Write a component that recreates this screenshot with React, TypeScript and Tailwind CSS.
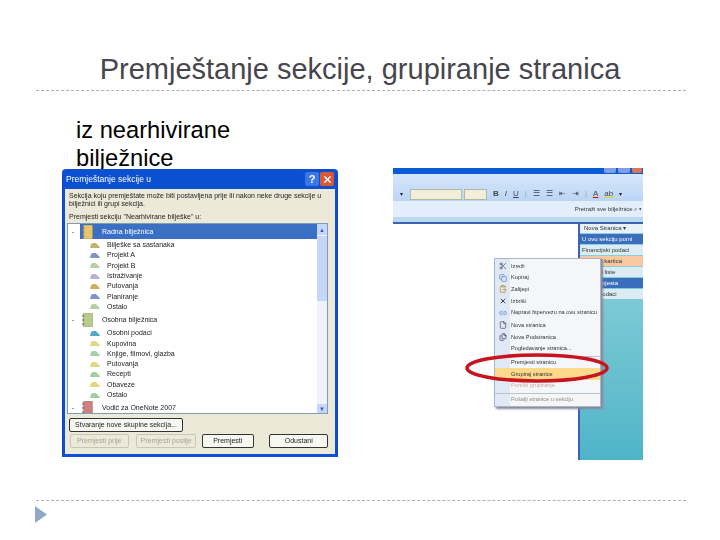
import { ClipboardPaste, Copy, File, Files, Link2, Scissors, X } from "lucide-react";

const NOTEBOOKS = [
  {
    name: "Radna bilježnica",
    color: "#e8c468",
    selected: true,
    sections: [
      { name: "Bilješke sa sastanaka", color: "#c8b070" },
      { name: "Projekt A", color: "#7f93c8" },
      { name: "Projekt B", color: "#b5cfa8" },
      { name: "Istraživanje", color: "#b5b5d0" },
      { name: "Putovanja", color: "#d0b060" },
      { name: "Planiranje", color: "#7f93c8" },
      { name: "Ostalo", color: "#b5cfa8" },
    ],
  },
  {
    name: "Osobna bilježnica",
    color: "#b5cf8a",
    selected: false,
    sections: [
      { name: "Osobni podaci", color: "#58a8c8" },
      { name: "Kupovina", color: "#e0d880" },
      { name: "Knjige, filmovi, glazba", color: "#a8d0a8" },
      { name: "Putovanja", color: "#e0d880" },
      { name: "Recepti", color: "#a0d0a0" },
      { name: "Obaveze", color: "#e0d880" },
      { name: "Ostalo", color: "#a0d0a0" },
    ],
  },
];

const PANEL_ROWS = [
  { label: "U ovu sekciju pomi", cls: "bg-[#3a6ebd] text-white" },
  { label: "Financijski podaci", cls: "bg-[#dcecf4] text-[#333]" },
  { label: "Pregled kartica", cls: "bg-[#f8c8a0] text-[#333]" },
  { label: "Zadaci i liste", cls: "bg-[#dcecf4] text-[#333]" },
  { label: "S web mjesta", cls: "bg-[#3a6ebd] text-white" },
  { label: "Ostali podaci", cls: "bg-[#dcecf4] text-[#333]" },
];

function SectionIcon({ color }: { color: string }) {
  return (
    <svg width="10" height="5" viewBox="0 0 12 6" preserveAspectRatio="none" className="shrink-0">
      <path d="M0 6 L1 2 Q1.5 0 4 0 L7 0 L11 4 L12 6 Z" fill={color} />
    </svg>
  );
}

function NotebookIcon({ color }: { color: string }) {
  return (
    <svg width="11" height="14" viewBox="0 0 11 15" className="shrink-0">
      <rect x="1" y="0" width="10" height="15" rx="1" fill={color} stroke="#8a8a70" strokeWidth="0.5" />
      <rect x="0" y="2" width="2" height="2" fill="#777" />
      <rect x="0" y="6.5" width="2" height="2" fill="#777" />
      <rect x="0" y="11" width="2" height="2" fill="#777" />
    </svg>
  );
}

function DialogButton({ label, disabled, width }: { label: string; disabled?: boolean; width: string }) {
  return (
    <div
      className={`flex h-[14px] items-center justify-center whitespace-nowrap rounded-[2px] border text-[7px] ${width} ${
        disabled ? "border-[#c8c6b8] text-[#a5a398]" : "border-[#333] bg-[#f8f8f2] text-[#222]"
      }`}
    >
      {label}
    </div>
  );
}

function MoveDialog() {
  return (
    <div className="flex h-[288px] w-[276px] shrink-0 flex-col rounded-t-[4px] bg-[#0a50d0] px-[3px] pb-[3px] blur-[0.5px]">
      <div className="flex h-[20px] shrink-0 items-center justify-between pl-[1px] pr-[1px] text-[8.5px] text-white">
        <span>Premještanje sekcije u</span>
        <div className="flex gap-[1px]">
          <div className="flex h-[14px] w-[14px] items-center justify-center rounded-[2px] bg-[#3a78e8] text-[11px] font-bold leading-none">?</div>
          <div className="flex h-[14px] w-[14px] items-center justify-center rounded-[2px] bg-[#d8583a]">
            <X size={11} strokeWidth={3} />
          </div>
        </div>
      </div>
      <div className="flex min-h-0 flex-1 flex-col bg-[#ece9d8] pb-[2px] pl-[2px] pr-[7px] pt-[3px] text-[7px] leading-[8px] text-[#222]">
        <p className="whitespace-nowrap px-[2px]">
          Sekcija koju premještate može biti postavljena prije ili nakon neke druge sekcije u
          <br />
          bilježnici ili grupi sekcija.
        </p>
        <p className="mt-[5px] px-[2px]">Premjesti sekciju "Nearhivirane bilješke" u:</p>
        <div className="mt-[2px] flex h-[191px] shrink-0 border border-[#7f9db9] bg-white">
          <div className="min-w-0 flex-1 overflow-hidden">
            {NOTEBOOKS.map((nb) => (
              <div key={nb.name}>
                <div className="flex h-[15px] items-center">
                  <span className="w-[12px] pl-[4px] text-[#333]">-</span>
                  <div className={`flex h-full flex-1 items-center gap-[9px] pl-[2px] ${nb.selected ? "bg-[#3a6fc4] text-white" : ""}`}>
                    <NotebookIcon color={nb.color} />
                    <span>{nb.name}</span>
                  </div>
                </div>
                <div className="pt-[1px]">
                  {nb.sections.map((s) => (
                    <div key={s.name + s.color} className="flex h-[10.3px] items-center gap-[7px] pl-[22px]">
                      <SectionIcon color={s.color} />
                      <span>{s.name}</span>
                    </div>
                  ))}
                </div>
              </div>
            ))}
            <div className="flex h-[15px] items-center">
              <span className="w-[12px] pl-[4px] text-[#333]">-</span>
              <div className="flex items-center gap-[9px] pl-[2px]">
                <NotebookIcon color="#d08080" />
                <span>Vodič za OneNote 2007</span>
              </div>
            </div>
          </div>
          <div className="flex w-[10px] shrink-0 flex-col bg-[#eef3fb]">
            <div className="flex h-[11px] items-center justify-center bg-[#c5d6fa] text-[6px] text-[#3a5fa8]">▲</div>
            <div className="mt-[1px] h-[65px] bg-[#c5d6fa]" />
            <div className="flex-1" />
            <div className="flex h-[9px] items-center justify-center bg-[#c5d6fa] text-[6px] text-[#3a5fa8]">▼</div>
          </div>
        </div>
        <div className="mt-[4px] pl-[2px]">
          <DialogButton label="Stvaranje nove skupine sekcija..." width="w-[114px]" />
        </div>
        <div className="mt-[2px] flex pl-[3px]">
          <DialogButton label="Premjesti prije" disabled width="w-[59px]" />
          <div className="w-[8px]" />
          <DialogButton label="Premjesti poslije" disabled width="w-[60px]" />
          <div className="w-[6px]" />
          <DialogButton label="Premjesti" width="w-[52px]" />
          <div className="w-[16px]" />
          <DialogButton label="Odustani" width="w-[59px]" />
        </div>
      </div>
    </div>
  );
}

function ToolbarGlyphs() {
  return (
    <div className="ml-[6px] flex items-center gap-[6px] text-[8px] text-[#445]">
      <span className="font-bold">B</span>
      <span className="italic">I</span>
      <span className="underline">U</span>
      <span className="text-[#9aa]">|</span>
      <span>☰</span>
      <span>☰</span>
      <span>⇤</span>
      <span>⇥</span>
      <span className="text-[#9aa]">|</span>
      <span className="underline decoration-[#d00]">A</span>
      <span className="underline decoration-[#dd0]">ab</span>
      <span className="text-[6px] text-[#223]">▾</span>
    </div>
  );
}

function MenuRow({ label, icon, cls }: { label: string; icon?: React.ReactNode; cls?: string }) {
  return (
    <div className={`flex h-[11.7px] items-center whitespace-nowrap ${cls ?? ""}`}>
      <div className="flex w-[15px] shrink-0 justify-center text-[#445]">{icon}</div>
      <span className="pl-[1px]">{label}</span>
    </div>
  );
}

function ContextMenu() {
  return (
    <div className="absolute left-[101px] top-[90px] w-[107px] border border-[#a8b8c8] bg-[#f4f6f8] bg-[linear-gradient(to_right,#dfe8f5_15px,#f4f6f8_15px)] py-[1px] text-[5.7px] text-[#333] shadow-[2px_2px_2px_#889]">
      <MenuRow label="Izreži" icon={<Scissors size={8} />} />
      <MenuRow label="Kopiraj" icon={<Copy size={8} color="#5080c0" />} />
      <MenuRow label="Zalijepi" icon={<ClipboardPaste size={8} color="#b08820" />} />
      <MenuRow label="Izbriši" icon={<X size={8} strokeWidth={3} />} />
      <MenuRow label="Napravi hipervezu na ovu stranicu" icon={<Link2 size={8} color="#5080c0" />} />
      <div className="mt-[1px]">
        <MenuRow label="Nova stranica" icon={<File size={8} />} />
        <MenuRow label="Nova Podstranica" icon={<Files size={8} color="#335" />} />
        <MenuRow label="Pogledavanje stranica..." />
      </div>
      <div className="mt-[1px] border-t border-[#b8c4d0]">
        <MenuRow label="Premjesti stranicu" />
        <MenuRow label="Grupiraj stranice" cls="bg-[#fdd98c]" />
        <MenuRow label="Poništi grupiranje" cls="text-[#c8a8a8]" />
      </div>
      <div className="mt-[1px] border-t border-[#b8c4d0]">
        <MenuRow label="Pošalji stranice u sekciju" cls="text-[#8a8a8a]" />
      </div>
    </div>
  );
}

function OneNoteWindow() {
  return (
    <div className="relative flex h-[292px] w-[250px] shrink-0 flex-col overflow-hidden bg-white blur-[0.5px]">
      <div className="flex h-[6px] shrink-0 justify-end gap-[2px] bg-[#0a5cd6] pr-[1px]">
        <div className="h-[5px] w-[12px] rounded-b-[2px] bg-[#7f9fe0]" />
        <div className="h-[5px] w-[12px] rounded-b-[2px] bg-[#7f9fe0]" />
        <div className="h-[5px] w-[10px] rounded-b-[2px] bg-[#d87858]" />
      </div>
      <div className="flex h-[27px] shrink-0 items-end bg-gradient-to-b from-[#d6e6fb] to-[#bcd5f5] pb-[1px] pl-[7px]">
        <span className="mr-[7px] w-[3px] text-[6px] leading-[11px] text-[#223]">▾</span>
        <div className="h-[11px] w-[52px] border border-[#b0b8a8] bg-[#f3eed8]" />
        <div className="ml-[2px] h-[11px] w-[23px] border border-[#b0b8a8] bg-[#f3eed8]" />
        <ToolbarGlyphs />
      </div>
      <div className="flex h-[16px] shrink-0 items-center justify-end bg-[#e2eefc] pr-[1px] text-[6px] text-[#333]">
        Pretraži sve bilježnice ⌕ ▾
      </div>
      <div className="h-[5px] shrink-0 bg-[#bcd8ee]" />
      <div className="flex min-h-0 flex-1">
        <div className="flex-1 border-r-[2px] border-t-[2px] border-[#3a62b0] bg-white" />
        <div className="flex w-[63px] shrink-0 flex-col border-t-[2px] border-[#3a62b0] bg-gradient-to-b from-[#90d4dc] to-[#4eb4c8] text-[6px]">
          <div className="flex h-[9px] items-center bg-[#e8f0f8] pl-[4px] text-[#333]">Nova Stranica ▾</div>
          {PANEL_ROWS.map((row) => (
            <div key={row.label} className={`mt-[1px] flex h-[10px] items-center whitespace-nowrap pl-[2px] ${row.cls}`}>
              {row.label}
            </div>
          ))}
        </div>
      </div>
      <ContextMenu />
    </div>
  );
}

export default function App() {
  return (
    <div className="relative flex h-[540px] w-[720px] flex-col overflow-hidden bg-white font-['Liberation_Sans',Arial,sans-serif]">
      <h1 className="mt-[51px] h-[37px] text-center text-[29px] font-normal leading-[37px] text-[#46464e]">
        Premještanje sekcije, grupiranje stranica
      </h1>
      <div className="ml-[36px] mr-[34px] mt-[2px] border-t border-dashed border-[#b0b0b0]" />
      <div className="mt-[25px] h-[53px] pl-[76px] text-[23.7px] leading-[28px] text-black">
        iz nearhivirane
        <br />
        bilježnice
      </div>
      <div className="relative flex items-start pl-[62px]">
        <MoveDialog />
        <div className="ml-[55px] -mt-[1px]">
          <OneNoteWindow />
        </div>
        <svg width="146" height="30" viewBox="0 0 146 30" className="absolute left-[464px] top-[184px]">
          <ellipse cx="73" cy="15" rx="70" ry="13" fill="none" stroke="#c8141e" strokeWidth="3.5" />
        </svg>
      </div>
      <div className="ml-[36px] mr-[34px] mt-[40px] border-t border-dashed border-[#a8b4c0]" />
      <svg width="12" height="17" viewBox="0 0 12 17" className="ml-[35px] mt-[5px]">
        <path d="M0 0 L12 8.5 L0 17 Z" fill="#8fa9c8" />
      </svg>
    </div>
  );
}
